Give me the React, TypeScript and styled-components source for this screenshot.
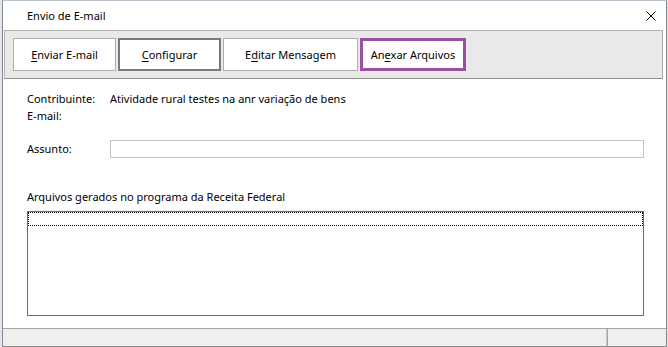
import { createGlobalStyle, styled } from "styled-components";

const GlobalStyle = createGlobalStyle`
	html, body {
		margin: 0;
		padding: 0;
		background: #e6e6e6;
	}
	body {
		font-family: "Noto Sans", "Liberation Sans", sans-serif;
		font-size: 11px;
		color: #000;
	}
`;

const Window = styled.div`
	box-sizing: border-box;
	width: 665px;
	height: 347px;
	margin-left: 2px;
	background: #fff;
	border-left: 1px solid #7f8a96;
	border-right: 1px solid #7f8a96;
	border-top: 1px solid #b9c2cc;
	display: flex;
	flex-direction: column;
`;

const TitleBar = styled.div`
	height: 29px;
	display: flex;
	align-items: center;
	justify-content: space-between;
	padding: 0 10px 0 24px;
`;

const Title = styled.span`
	font-size: 11px;
	padding-bottom: 1px;
`;

const Toolbar = styled.div`
	box-sizing: border-box;
	height: 49px;
	margin: 0 3px 0 1px;
	background: #e9e9e9;
	border: 1px solid #b4b4b4;
	border-bottom-color: #8f8f8f;
	border-right-color: #a8a8a8;
	display: flex;
	align-items: center;
	gap: 2px;
	padding: 0 0 1px 8px;
`;

const ToolButton = styled.button<{ $width: number; $variant?: "default" | "selected" }>`
	box-sizing: border-box;
	width: ${({ $width }) => $width}px;
	height: 33px;
	background: #fff;
	font: inherit;
	font-size: 11px;
	color: #000;
	padding: 0;
	margin: 0;
	border: ${({ $variant }) =>
		$variant === "default"
			? "2px solid #7a7a7a"
			: $variant === "selected"
			? "3px solid #9a4f9f"
			: "1px solid #adadad"};
	u {
		text-decoration: underline;
		text-underline-offset: 2px;
	}
`;

const Content = styled.div`
	flex: 1;
	display: flex;
	flex-direction: column;
	padding: 0 22px 0 24px;
`;

const InfoRow = styled.div<{ $top: number }>`
	display: flex;
	align-items: center;
	margin-top: ${({ $top }) => $top}px;
	height: 17px;
`;

const Label = styled.span`
	width: 83px;
	flex-shrink: 0;
`;

const Value = styled.span``;

const TextBox = styled.div`
	box-sizing: border-box;
	flex: 1;
	height: 18px;
	border: 1px solid #c4c4c4;
	background: #fff;
`;

const SectionLabel = styled.div`
	margin-top: 31px;
	height: 17px;
	display: flex;
	align-items: center;
`;

const ListBox = styled.div`
	box-sizing: border-box;
	margin-top: 6px;
	height: 105px;
	border: 1px solid #6c6c6c;
	background: #fff;
	padding: 0;
`;

const FocusRow = styled.div`
	box-sizing: border-box;
	height: 14px;
	border: 1px dotted #000;
`;

const StatusBar = styled.div`
	box-sizing: border-box;
	height: 19px;
	margin-top: auto;
	background: #efefef;
	border-top: 1px solid #a4a4a4;
	border-bottom: 1px solid #8a8a8a;
	display: flex;
`;

const StatusPanel = styled.div<{ $width?: number }>`
	box-sizing: border-box;
	${({ $width }) => ($width ? `width: ${$width}px;` : "flex: 1;")}
	border-right: 1px solid #c8c8c8;
	&:last-child {
		border-right: none;
		border-left: 1px solid #a4a4a4;
	}
`;

const CloseIcon = () => (
	<svg width="10" height="10" viewBox="0 0 10 10">
		<path d="M0.5 0.5 L9.5 9.5 M9.5 0.5 L0.5 9.5" stroke="#000" strokeWidth="1" fill="none" />
	</svg>
);

export default function App() {
	return (
		<>
			<GlobalStyle />
			<Window>
				<TitleBar>
					<Title>Envio de E-mail</Title>
					<CloseIcon />
				</TitleBar>
				<Toolbar>
					<ToolButton $width={103}>
						<u>E</u>nviar E-mail
					</ToolButton>
					<ToolButton $width={103} $variant="default">
						<u>C</u>onfigurar
					</ToolButton>
					<ToolButton $width={135}>
						E<u>d</u>itar Mensagem
					</ToolButton>
					<ToolButton $width={106} $variant="selected">
						An<u>e</u>xar Arquivos
					</ToolButton>
				</Toolbar>
				<Content>
					<InfoRow $top={11}>
						<Label>Contribuinte:</Label>
						<Value>Atividade rural testes na anr variação de bens</Value>
					</InfoRow>
					<InfoRow $top={0}>
						<Label>E-mail:</Label>
					</InfoRow>
					<InfoRow $top={16}>
						<Label>Assunto:</Label>
						<TextBox />
					</InfoRow>
					<SectionLabel>Arquivos gerados no programa da Receita Federal</SectionLabel>
					<ListBox>
						<FocusRow />
					</ListBox>
				</Content>
				<StatusBar>
					<StatusPanel />
					<StatusPanel $width={59} />
				</StatusBar>
			</Window>
		</>
	);
}
